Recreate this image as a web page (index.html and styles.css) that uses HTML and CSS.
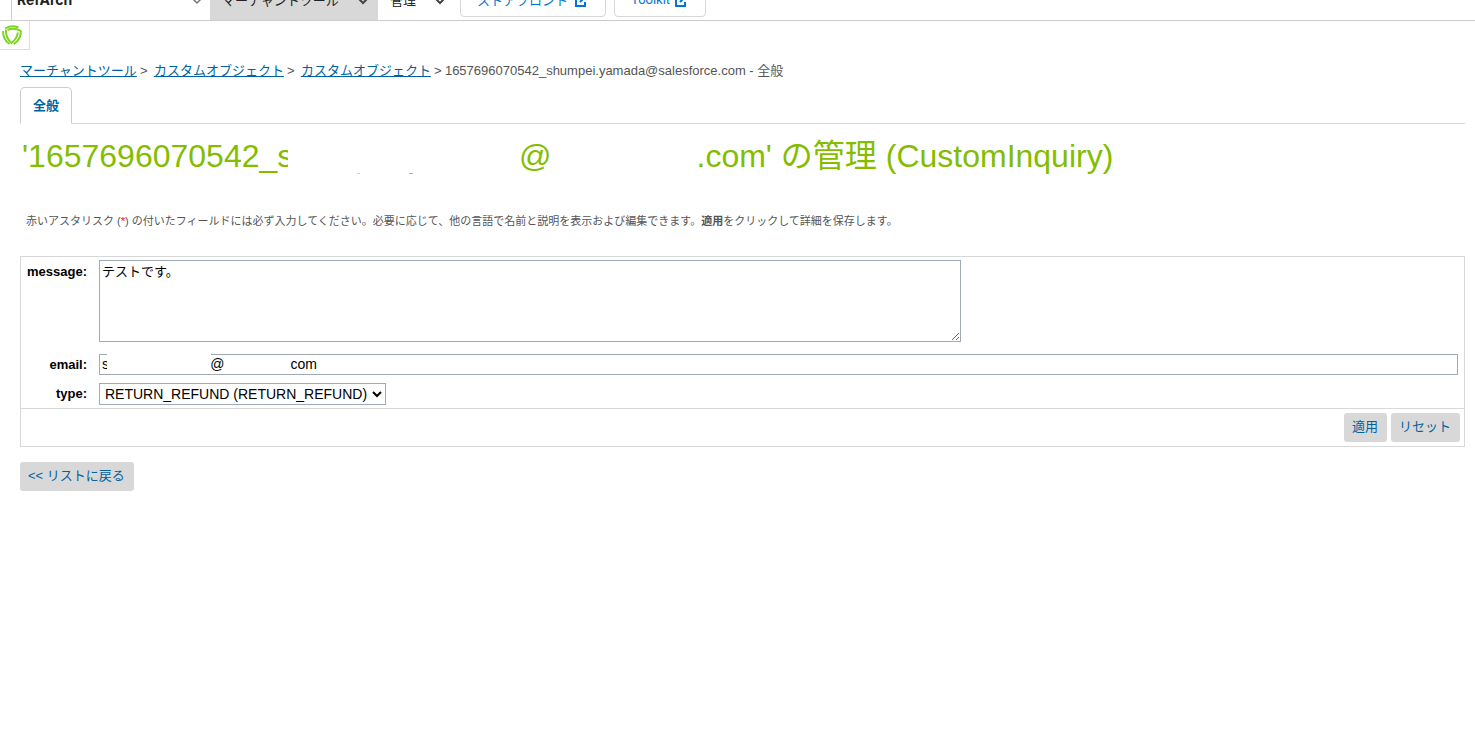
FILE: index.html
```html
<!DOCTYPE html>
<html lang="ja">
<head>
    <meta charset="UTF-8">
    <title>CustomInquiry の管理</title>
    <link rel="stylesheet" href="styles.css">
</head>
<body>
    <header class="topbar">
        <button type="button" class="menu menu-site">RefArch
            <svg class="chevron" viewBox="0 0 10 8"><path d="M1 2l4 4 4-4"/></svg>
        </button>
        <button type="button" class="menu menu-merchant">マーチャントツール
            <svg class="chevron" viewBox="0 0 10 8"><path d="M1 2l4 4 4-4"/></svg>
        </button>
        <button type="button" class="menu menu-admin">管理
            <svg class="chevron" viewBox="0 0 10 8"><path d="M1 2l4 4 4-4"/></svg>
        </button>
        <a class="toplink storefront" href="#">ストアフロント
            <svg class="external" viewBox="0 0 14 14"><path d="M5 3H1v10h9V9M5 9l7-7M8 1h5v6"/></svg>
        </a>
        <a class="toplink toolkit" href="#">Toolkit
            <svg class="external" viewBox="0 0 14 14"><path d="M5 3H1v10h9V9M5 9l7-7M8 1h5v6"/></svg>
        </a>
    </header>

    <div class="shield-box">
        <svg class="shield" viewBox="0 0 20 20">
            <path d="M3 3.500C7 .8 12 .6 16.500 2.500"/>
            <path d="M5.500 5C9 3.300 14 3.300 18.800 6c.2 5-2.300 10-7 13"/>
            <path d="M15.800 7.500c-.4 4-2.600 7.500-6.300 10.500C6 15.500 4 11 3.800 4.500"/>
            <path d="M1 6c0 5.500 2.500 10.500 6.500 13"/>
        </svg>
    </div>

    <main class="content">
        <nav class="breadcrumb">
            <a href="#">マーチャントツール</a><span class="sep">&gt;</span>
            <a href="#">カスタムオブジェクト</a><span class="sep">&gt;</span>
            <a href="#">カスタムオブジェクト</a><span class="sep last">&gt;</span>
            <span>1657696070542_shumpei.yamada@salesforce.com - 全般</span>
        </nav>

        <div class="tabs">
            <a class="tab" href="#">全般</a>
        </div>

        <h1 class="title"><span class="account">'1657696070542_s</span><span class="hidden-name"></span><span>@</span><span class="hidden-domain"></span><span>.com' の管理 (CustomInquiry)</span></h1>

        <p class="hint">赤いアスタリスク (<span class="required">*</span>) の付いたフィールドには必ず入力してください。必要に応じて、他の言語で名前と説明を表示および編集できます。<b>適用</b>をクリックして詳細を保存します。</p>

        <form class="panel">
            <div class="fields">
                <label for="message" class="label-top">message:</label>
                <textarea id="message">テストです。</textarea>

                <label for="email">email:</label>
                <div class="email-field">
                    <input type="text" id="email" value="s&nbsp;&nbsp;&nbsp;&nbsp;&nbsp;&nbsp;&nbsp;&nbsp;&nbsp;&nbsp;&nbsp;&nbsp;&nbsp;&nbsp;&nbsp;&nbsp;&nbsp;&nbsp;&nbsp;&nbsp;&nbsp;&nbsp;&nbsp;&nbsp;&nbsp;&nbsp;@&nbsp;&nbsp;&nbsp;&nbsp;&nbsp;&nbsp;&nbsp;&nbsp;&nbsp;&nbsp;&nbsp;&nbsp;&nbsp;&nbsp;&nbsp;&nbsp;&nbsp;com">
                    <span class="email-mask"></span>
                </div>

                <label for="type">type:</label>
                <select id="type">
                    <option>RETURN_REFUND (RETURN_REFUND)</option>
                </select>
            </div>
            <div class="actions">
                <button type="button" class="btn">適用</button>
                <button type="reset" class="btn">リセット</button>
            </div>
        </form>

        <button type="button" class="btn">&lt;&lt; リストに戻る</button>
    </main>
</body>
</html>
```
FILE: styles.css
```css
* {
    box-sizing: border-box;
}
body {
    margin: 0;
    background: #fff;
    color: #555;
    font-family: "Liberation Sans", "Noto Sans CJK JP", sans-serif;
    font-size: 13px;
}

/* top bar, scrolled half out of view */
.topbar {
    display: flex;
    align-items: flex-end;
    height: 21px;
    padding-left: 11px;
    overflow: hidden;
    border-bottom: 1px solid #ccc;
}
.menu {
    display: flex;
    flex: none;
    align-items: center;
    justify-content: space-between;
    height: 40px;
    padding: 0 10px 2px 12px;
    border: 0;
    background: #fff;
    color: #222;
    font-family: Inter, "Noto Sans CJK JP", sans-serif;
    font-size: 13px;
}
.menu-site {
    width: 199px;
    padding: 0 8px 2px 5px;
    border-left: 1px solid #ccc;
    font-size: 14px;
    font-weight: 700;
}
.menu-merchant {
    width: 168px;
    background: #d8d8d8;
}
.menu-admin {
    width: 82px;
    padding-right: 15px;
}
.chevron {
    width: 10px;
    height: 8px;
    margin-top: 4px;
    fill: none;
    stroke: #444;
    stroke-width: 2;
}
.menu-site .chevron {
    stroke: #777;
    stroke-width: 1.5;
}
.toplink {
    display: flex;
    flex: none;
    align-items: center;
    justify-content: space-between;
    height: 34px;
    margin: 0 8px 3px 0;
    padding: 0 16px 2px;
    border: 1px solid #d8d8d8;
    border-radius: 4px;
    color: #0176d3;
    font-family: Roboto, "Noto Sans CJK JP", sans-serif;
    text-decoration: none;
}
.storefront {
    width: 146px;
}
.toolkit {
    width: 92px;
}
.external {
    width: 14px;
    height: 14px;
    margin-top: 2px;
    fill: none;
    stroke: #0176d3;
    stroke-width: 2;
}

.shield-box {
    width: 30px;
    height: 29px;
    padding: 4px 2px;
    border-right: 1px solid #ddd;
    border-bottom: 1px solid #ddd;
}
.shield {
    display: block;
    width: 20px;
    height: 20px;
    fill: none;
    stroke: #7ed321;
    stroke-width: 2;
}

.content {
    padding: 12px 10px 0 20px;
}
.breadcrumb {
    display: flex;
    height: 25px;
    line-height: 18px;
    white-space: nowrap;
}
.breadcrumb a {
    color: #00639e;
}
.sep {
    width: 17px;
    padding-left: 3px;
}
.sep.last {
    width: 14px;
}

.tabs {
    display: flex;
    height: 37px;
    border-bottom: 1px solid #d8d8d8;
}
.tab {
    height: 37px;
    padding: 0 12px;
    border: 1px solid #ccc;
    border-bottom-color: #fff;
    border-radius: 5px 5px 0 0;
    background: #fff;
    color: #00639e;
    font-weight: bold;
    line-height: 36px;
    text-decoration: none;
}

.title {
    display: flex;
    height: 48px;
    margin: 8px 0 30px;
    padding-left: 2px;
    color: #84bd00;
    font-size: 32px;
    font-weight: normal;
    line-height: 48px;
    white-space: nowrap;
}
.account {
    width: 266px;
    overflow: hidden;
}
.hidden-name {
    width: 231px;
    background:
        linear-gradient(#c5de85, #c5de85) 69px 41px / 3px 1px no-repeat,
        linear-gradient(#a5cd40, #a5cd40) 121px 41px / 4px 1px no-repeat;
}
.hidden-domain {
    width: 145px;
}

.hint {
    margin: 0 0 24px;
    padding-left: 6px;
    font-size: 11px;
    line-height: 22px;
}
.required {
    color: #f00;
}

.panel {
    margin-bottom: 15px;
    border: 1px solid #d8d8d8;
}
.fields {
    display: grid;
    grid-template-columns: 66px 1fr;
    gap: 8px 12px;
    padding: 3px 6px 3px 0;
}
.fields label {
    color: #000;
    font-weight: bold;
    line-height: 21px;
    text-align: right;
}
.fields .label-top {
    line-height: 24px;
}
.fields input,
.fields textarea,
.fields select {
    display: block;
    border: 1px solid #9faab5;
    border-radius: 0;
    background: #fff;
    color: #000;
    font-family: "Liberation Sans", "Noto Sans CJK JP", sans-serif;
    font-size: 14px;
}
.fields textarea {
    width: 862px;
    max-width: 100%;
    height: 82px;
    margin-bottom: 4px;
    padding: 0 2px;
    font-size: 13px;
}
.fields input {
    width: 100%;
    height: 21px;
    padding: 0 2px 1px;
}
.fields select {
    width: 287px;
    height: 22px;
    padding: 0 1px;
}
.email-field {
    position: relative;
}
.email-mask {
    position: absolute;
    top: 0;
    left: 8px;
    width: 104px;
    height: 19px;
    background: #fff;
}
.actions {
    display: flex;
    justify-content: flex-end;
    gap: 4px;
    padding: 4px;
    border-top: 1px solid #d8d8d8;
}
.btn {
    height: 29px;
    padding: 0 9px 4px 8px;
    border: 0;
    border-radius: 3px;
    background: #d8d8d8;
    color: #00639e;
    font-family: "Liberation Sans", "Noto Sans CJK JP", sans-serif;
    font-size: 13px;
}
```
